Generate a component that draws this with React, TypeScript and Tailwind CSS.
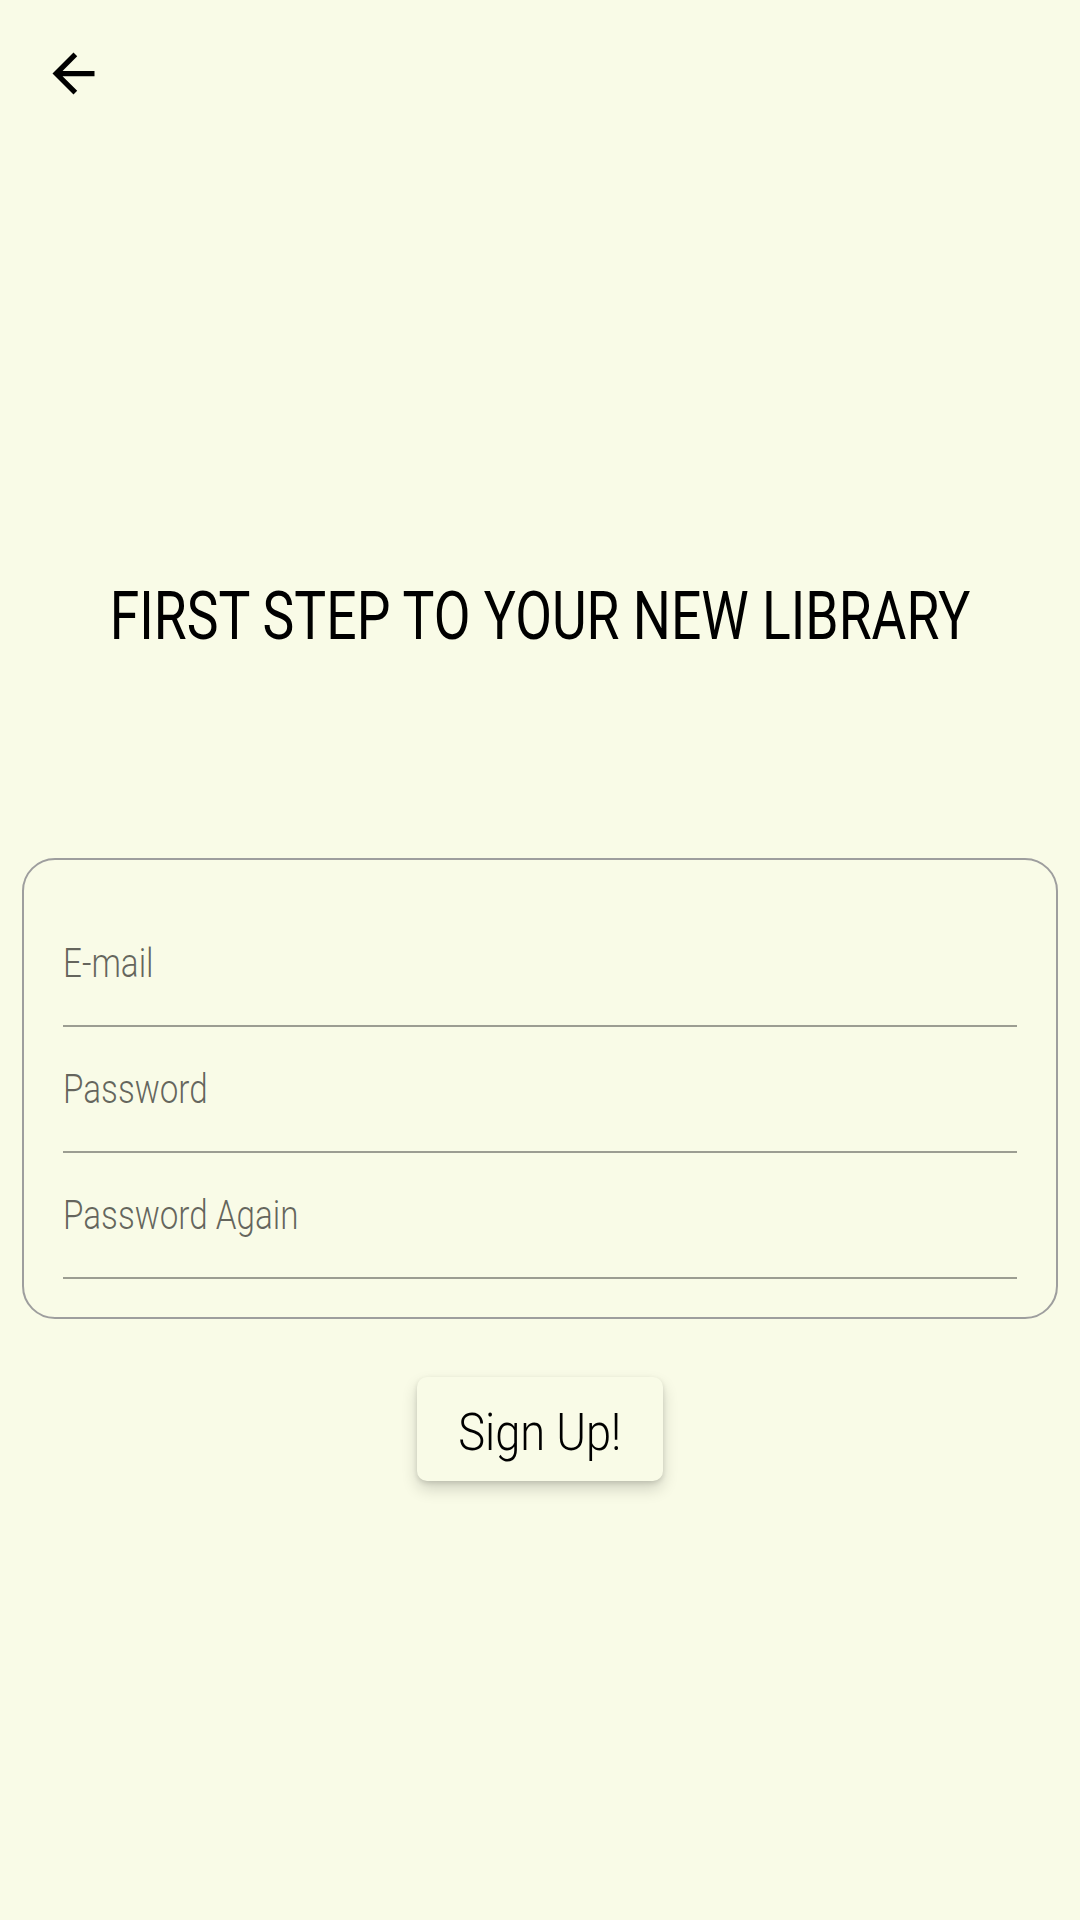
export default function App() {
  const fields = ["E-mail", "Password", "Password Again"];
  return (
    <div className="min-h-[1920px] w-full bg-[#f9fbe7] font-[Roboto,sans-serif] text-black">
      <div className="pt-[42px] pl-[42px]">
        <button type="button" aria-label="Back" className="block h-[63px] w-[63px]">
          <svg viewBox="0 0 24 24" className="h-[63px] w-[63px]" fill="currentColor">
            <path d="M20 11H7.83l5.59-5.59L12 4l-8 8 8 8 1.41-1.41L7.83 13H20v-2z" />
          </svg>
        </button>
      </div>
      <h1 className="mt-[472px] scale-x-[0.81] whitespace-nowrap text-center text-[66px] leading-[80px] font-normal">
        FIRST STEP TO YOUR NEW LIBRARY
      </h1>
      <div className="mx-[22px] mt-[201px] rounded-[33px] border-2 border-[#9e9e9e] px-[39px] pt-[41px] pb-[38px]">
        {fields.map((f) => (
          <div key={f} className="h-[126px] overflow-hidden border-b-2 border-[#9c9d92] pt-[39px]">
            <input
              type={f === "E-mail" ? "email" : "password"}
              placeholder={f}
              className="h-[48px] w-[120%] origin-left scale-x-[0.83] bg-transparent text-[40px] font-light leading-[48px] text-black outline-none placeholder:text-black/60"
            />
          </div>
        ))}
      </div>
      <div className="mt-[58px] flex justify-center">
        <button
          type="button"
          className="flex h-[104px] w-[246px] items-center justify-center rounded-[10px] bg-[#f9fbe7] pt-[8px] text-[52px] font-light text-black shadow-[0_8px_16px_rgba(0,0,0,0.16),0_2px_5px_rgba(0,0,0,0.12)]"
        >
          <span className="inline-block scale-x-[0.87] whitespace-nowrap">Sign Up!</span>
        </button>
      </div>
    </div>
  );
}
